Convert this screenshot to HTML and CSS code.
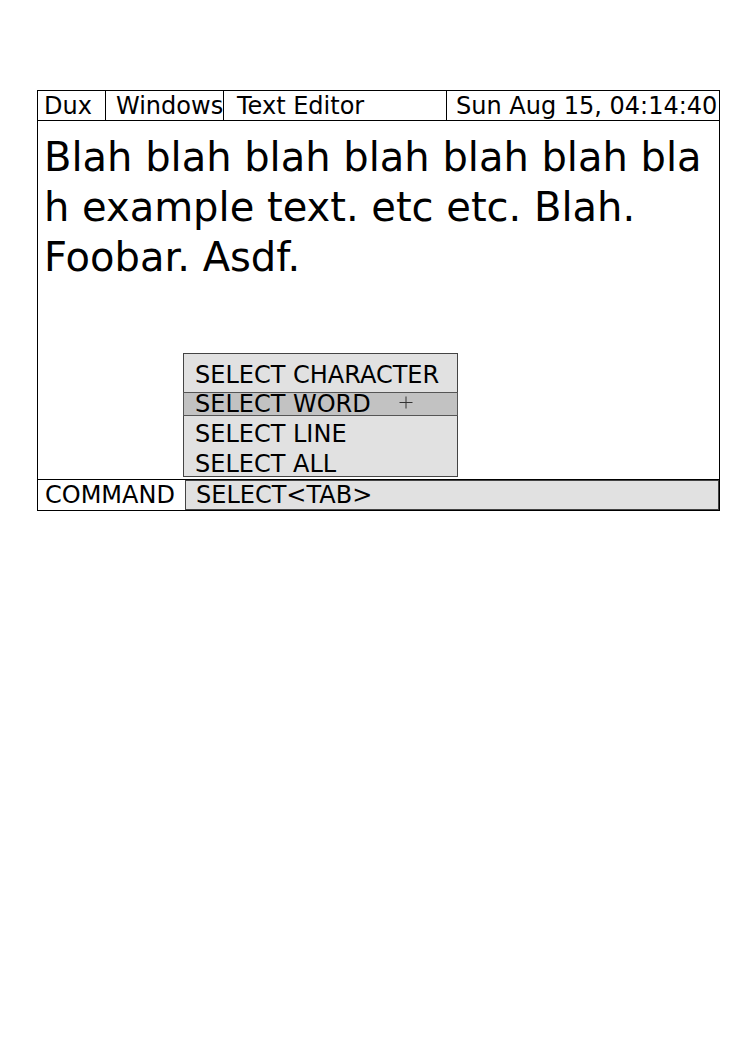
FILE: index.html
```html
<!DOCTYPE html>
<html>
<head>
<meta charset="utf-8">
<link rel="stylesheet" href="styles.css">
</head>
<body>
<div class="frame">
  <div class="titlebar">
    <div class="cell cell-dux">Dux</div>
    <div class="cell cell-win">Windows</div>
    <div class="cell cell-app">Text Editor</div>
    <div class="cell cell-clock">Sun Aug 15, 04:14:40</div>
  </div>
  <div class="doc">
    <p class="text">Blah blah blah blah blah blah blah example text. etc etc. Blah.<br>Foobar. Asdf.</p>
    <div class="menu">
      <div class="item">SELECT CHARACTER</div>
      <div class="item sel">SELECT WORD<svg class="cursor" width="14" height="13" viewBox="0 0 14 13"><path d="M7 0.5V12.5M0.5 6.5H13.5" stroke="#333" stroke-width="1" fill="none"/></svg></div>
      <div class="item">SELECT LINE</div>
      <div class="item">SELECT ALL</div>
    </div>
  </div>
  <div class="cmdbar">
    <div class="cmd-label">COMMAND</div>
    <div class="cmd-input">SELECT&lt;TAB&gt;</div>
  </div>
</div>
</body>
</html>
```
FILE: styles.css
```css
html, body {
  margin: 0;
  padding: 0;
  background: #fff;
}
body {
  font-family: "DejaVu Sans", sans-serif;
  color: #000;
}
.frame {
  margin: 90px 0 0 37px;
  width: 681px;
  border: 1px solid #000;
  display: flex;
  flex-direction: column;
}
.titlebar {
  display: flex;
  height: 29px;
  border-bottom: 1px solid #000;
  font-size: 24px;
  line-height: 30px;
  white-space: nowrap;
}
.cell {
  border-right: 1px solid #000;
  overflow: hidden;
}
.cell-dux { width: 61px; padding-left: 6px; }
.cell-win { width: 107px; padding-left: 10px; }
.cell-app { width: 209px; padding-left: 13px; }
.cell-clock { flex: 1; padding-left: 9px; border-right: none; }
.doc {
  position: relative;
  height: 358px;
}
.text {
  margin: 0;
  padding: 11px 0 0 6px;
  font-size: 40px;
  line-height: 50px;
  word-break: break-all;
}
.menu {
  position: absolute;
  left: 145px;
  top: 232px;
  width: 275px;
  height: 124px;
  box-sizing: border-box;
  border: 1px solid #444;
  background: #e1e1e1;
  padding-top: 7px;
  font-size: 24px;
  z-index: 1;
}
.item {
  height: 29.5px;
  line-height: 29.5px;
  padding-left: 11px;
  white-space: nowrap;
}
.item.sel {
  box-sizing: border-box;
  height: 24px;
  margin: 1.5px -1px 4px;
  border: 1px solid #555;
  background: #c2c2c2;
  line-height: 23px;
}
.cursor {
  margin-left: 28px;
  vertical-align: 3px;
}
.cmdbar {
  display: flex;
  height: 30px;
  border-top: 1px solid #000;
  font-size: 24px;
}
.cmd-label {
  width: 140px;
  padding-left: 7px;
  line-height: 30px;
}
.cmd-input {
  flex: 1;
  border: 1px solid #444;
  background: #e1e1e1;
  padding-left: 10px;
  line-height: 28px;
}
```
